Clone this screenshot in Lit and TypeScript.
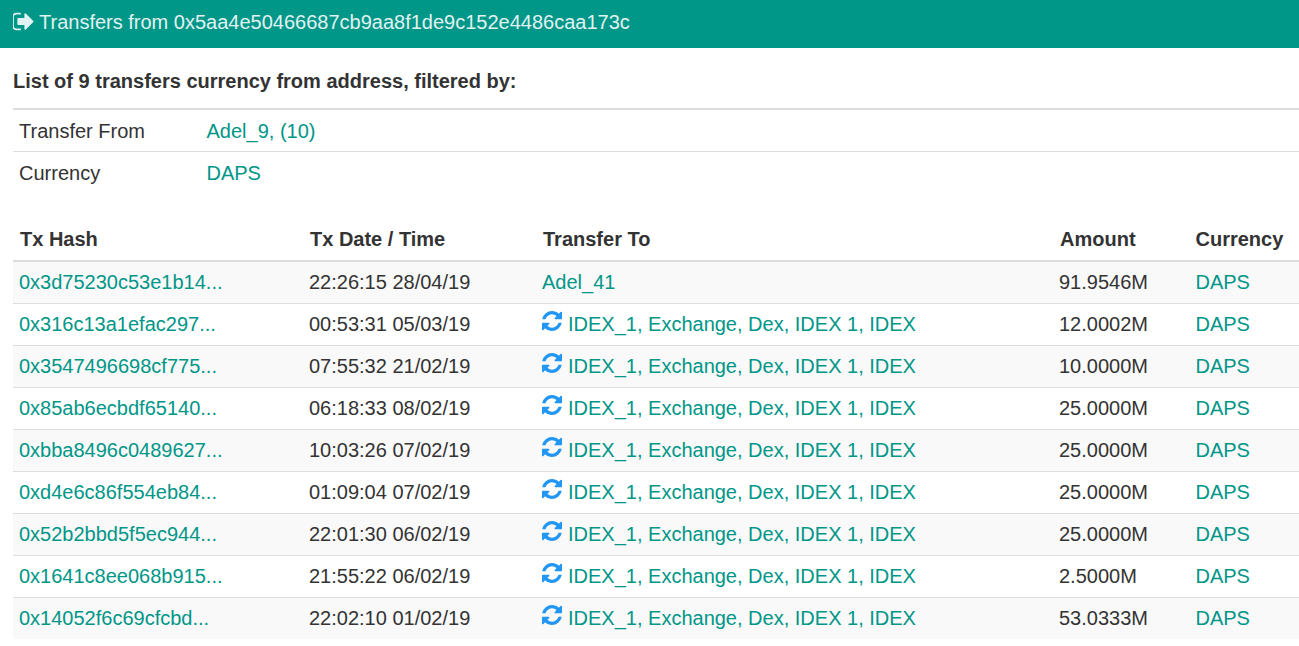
import { LitElement, html, css, svg } from "lit";
import { customElement } from "lit/decorators.js";

const REFRESH = svg`<path d="M1639 1056q0 5-1 7-64 268-268 434.5t-478 166.5q-146 0-282.5-55t-243.5-157l-129 129q-19 19-45 19t-45-19-19-45v-448q0-26 19-45t45-19h448q26 0 45 19t19 45-19 45l-137 137q71 66 161 102t187 36q134 0 250-65t186-179q11-17 53-117 8-23 30-23h192q13 0 22.5 9.5t9.5 22.5zm25-800v448q0 26-19 45t-45 19h-448q-26 0-45-19t-19-45 19-45l138-138q-148-137-349-137-134 0-250 65t-186 179q-11 17-53 117-8 23-30 23h-199q-13 0-22.5-9.5t-9.5-22.5v-7q65-268 270-434.5t480-166.5q146 0 284 55.5t245 156.5l130-129q19-19 45-19t45 19 19 45z"/>`;
const SIGNOUT = svg`<path d="M704 1440q0 4 1 20t.5 26.5-3 23.5-10 19.5-20.5 6.5h-320q-119 0-203.5-84.5t-84.5-203.5v-704q0-119 84.5-203.5t203.5-84.5h320q13 0 22.5 9.5t9.5 22.5q0 4 1 20t.5 26.5-3 23.5-10 19.5-20.5 6.5h-320q-66 0-113 47t-47 113v704q0 66 47 113t113 47h312l11.5 1 11.5 3 8 5.5 7 9 2 13.5zm928-544q0 26-19 45l-544 544q-19 19-45 19t-45-19-19-45v-288h-448q-26 0-45-19t-19-45v-384q0-26 19-45t45-19h448v-288q0-26 19-45t45-19 45 19l544 544q19 19 19 45z"/>`;

const IDEX = "IDEX_1, Exchange, Dex, IDEX 1, IDEX";
const ROWS: [string, string, string, string, boolean][] = [
  ["0x3d75230c53e1b14...", "22:26:15 28/04/19", "Adel_41", "91.9546M", false],
  ["0x316c13a1efac297...", "00:53:31 05/03/19", IDEX, "12.0002M", true],
  ["0x3547496698cf775...", "07:55:32 21/02/19", IDEX, "10.0000M", true],
  ["0x85ab6ecbdf65140...", "06:18:33 08/02/19", IDEX, "25.0000M", true],
  ["0xbba8496c0489627...", "10:03:26 07/02/19", IDEX, "25.0000M", true],
  ["0xd4e6c86f554eb84...", "01:09:04 07/02/19", IDEX, "25.0000M", true],
  ["0x52b2bbd5f5ec944...", "22:01:30 06/02/19", IDEX, "25.0000M", true],
  ["0x1641c8ee068b915...", "21:55:22 06/02/19", IDEX, "2.5000M", true],
  ["0x14052f6c69cfcbd...", "22:02:10 01/02/19", IDEX, "53.0333M", true],
];

@customElement("app-root")
export class AppRoot extends LitElement {
  static styles = css`
    :host {
      display: block;
      font-family: "Liberation Sans", Arial, sans-serif;
      font-size: 20px;
      color: #333;
      background: #fff;
    }
    a { color: #009688; text-decoration: none; }
    .bar {
      display: flex;
      align-items: center;
      gap: 5px;
      height: 48px;
      box-sizing: border-box;
      padding: 0 13px 3px;
      background: #009688;
      color: #e0f2f1;
      font-size: 20px;
    }
    .bar svg { width: 21px; height: 21px; margin-bottom: 3px; fill: currentColor; }
    .content { padding: 0 0 0 13px; }
    h4 {
      margin: 0;
      padding: 21px 0 14px;
      font-size: 20px;
      line-height: 25px;
      font-weight: 700;
      color: #333;
    }
    table { border-collapse: collapse; border-spacing: 0; width: 1286px; table-layout: fixed; }
    td, th {
      padding: 8px 6px;
      line-height: 25px;
      height: 25px;
      text-align: left;
      white-space: nowrap;
      vertical-align: top;
    }
    .filters { border-top: 2px solid #ddd; margin-bottom: 26px; }
    .filters tr + tr td { border-top: 1px solid #ddd; }
    .filters td { padding: 9px 6px 7px; }
    .list th {
      font-weight: 700;
      border-bottom: 2px solid #ddd;
      padding-left: 7px;
      padding-bottom: 8px;
    }
    .list th:last-child { padding-left: 6px; }
    .list td { border-top: 1px solid #ddd; }
    .list tbody tr:first-child td { border-top: 0; }
    .list tbody tr:nth-child(odd) { background: #f9f9f9; }
    .ic { width: 20px; height: 20px; fill: #2196f3; vertical-align: 0; margin: -4px 6px 0 0; }
  `;

  render() {
    return html`
      <div class="bar">
        <svg viewBox="128 128 1536 1536">${SIGNOUT}</svg>
        <span>Transfers from 0x5aa4e50466687cb9aa8f1de9c152e4486caa173c</span>
      </div>
      <div class="content">
        <h4>List of 9 transfers currency from address, filtered by:</h4>
        <table class="filters">
          <colgroup><col style="width:187.5px" /><col /></colgroup>
          <tbody>
            <tr><td>Transfer From</td><td><a href="#">Adel_9, (10)</a></td></tr>
            <tr><td>Currency</td><td><a href="#">DAPS</a></td></tr>
          </tbody>
        </table>
        <table class="list">
          <colgroup>
            <col style="width:290px" /><col style="width:233px" /><col style="width:517px" /><col style="width:136.5px" /><col />
          </colgroup>
          <thead>
            <tr><th>Tx Hash</th><th>Tx Date / Time</th><th>Transfer To</th><th>Amount</th><th>Currency</th></tr>
          </thead>
          <tbody>
            ${ROWS.map(
              ([h, d, to, amt, ex]) => html`<tr>
                <td><a href="#">${h}</a></td>
                <td>${d}</td>
                <td>
                  ${ex ? html`<svg class="ic" viewBox="128 128 1536 1536">${REFRESH}</svg>` : ""}<a href="#">${to}</a>
                </td>
                <td>${amt}</td>
                <td><a href="#">DAPS</a></td>
              </tr>`
            )}
          </tbody>
        </table>
      </div>
    `;
  }
}
